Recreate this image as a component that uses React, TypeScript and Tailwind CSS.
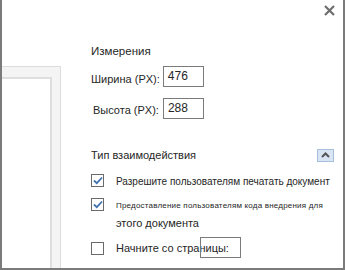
import { useState } from "react";

const font = { fontFamily: '"Liberation Sans", Arial, sans-serif' };

export default function App() {
  const [allowPrint, setAllowPrint] = useState(true);
  const [allowEmbed, setAllowEmbed] = useState(true);
  const [startPage, setStartPage] = useState(false);

  return (
    <div
      style={font}
      className="relative flex w-[345px] h-[270px] overflow-hidden whitespace-nowrap bg-white border-x-2 border-b-2 border-[#7b7b7b] text-[#262626]"
    >
      <button className="absolute top-[3px] right-[7px] w-[14px] h-[14px] flex items-center justify-center">
        <svg width="11" height="11" viewBox="0 0 11 11">
          <path d="M1 1 L10 10 M10 1 L1 10" stroke="#6e6e6e" strokeWidth="2.2" />
        </svg>
      </button>

      {/* document preview */}
      <div className="w-[59px] shrink-0 pt-[66px] flex flex-col">
        <div className="flex-1 flex flex-col pt-[10px] pr-[8px] bg-[#f4f4f4] border-t border-r border-[#dcdcdc]">
          <div className="flex-1 bg-white border-t-2 border-r-2 border-[#dedede]" />
        </div>
      </div>

      {/* settings */}
      <div className="flex-1 pl-[30px] pr-[9px] pt-[43px] flex flex-col">
        <div className="text-[11.5px] leading-[16px]">Измерения</div>

        <div className="mt-[7px] flex items-center gap-[3px]">
          <span className="text-[11px] leading-[16px] pt-[5px]">Ширина (PX):</span>
          <SizeInput value="476" />
        </div>
        <div className="mt-[11px] ml-[2px] flex items-center gap-[4px]">
          <span className="text-[11px] leading-[16px] pt-[3px]">Высота (PX):</span>
          <SizeInput value="288" />
        </div>

        <div className="mt-[28px] flex items-center justify-between">
          <span className="text-[11px] leading-[16px]">Тип взаимодействия</span>
          <button className="w-[17px] h-[13px] flex items-center justify-center bg-[#dae5f4] border border-[#a7bfdf]">
            <svg width="9" height="6" viewBox="0 0 9 6">
              <path d="M1 5 L4.5 1.5 L8 5" fill="none" stroke="#555" strokeWidth="2" />
            </svg>
          </button>
        </div>

        <div className="mt-[9px] flex items-center gap-[12px]">
          <Check checked={allowPrint} onChange={setAllowPrint} />
          <span className="text-[10px] leading-[14px] pt-[3px]">
            Разрешите пользователям печатать документ
          </span>
        </div>

        <div className="mt-[9px] flex items-start gap-[12px]">
          <Check checked={allowEmbed} onChange={setAllowEmbed} />
          <div className="flex flex-col">
            <span className="text-[8px] leading-[12px] pt-[2px] tracking-[0.2px]">
              Предоставление пользователям кода внедрения для
            </span>
            <span className="text-[11px] leading-[16px] mt-[3px]">этого документа</span>
          </div>
        </div>

        <div className="mt-[9px] flex items-center gap-[12px]">
          <Check checked={startPage} onChange={setStartPage} />
          <span className="relative text-[11px] leading-[16px]">
            Начните со страницы:
            <span className="absolute left-[84px] top-[-3px] w-[41px] h-[21px] border border-[#7b7b7b]" />
          </span>
        </div>
      </div>
    </div>
  );
}

function SizeInput({ value }: { value: string }) {
  return (
    <div className="w-[41px] h-[21px] border border-[#7b7b7b] pl-[4px] text-[12px] leading-[19px]">
      {value}
    </div>
  );
}

function Check({ checked, onChange }: { checked: boolean; onChange: (v: boolean) => void }) {
  return (
    <button
      onClick={() => onChange(!checked)}
      className="w-[13px] h-[13px] shrink-0 border border-[#6a6a6a] bg-white flex items-center justify-center"
    >
      {checked && (
        <svg width="10" height="9" viewBox="0 0 10 9">
          <path d="M1 4.5 L3.8 7.2 L9 1.5" fill="none" stroke="#4274b0" strokeWidth="1.8" />
        </svg>
      )}
    </button>
  );
}
